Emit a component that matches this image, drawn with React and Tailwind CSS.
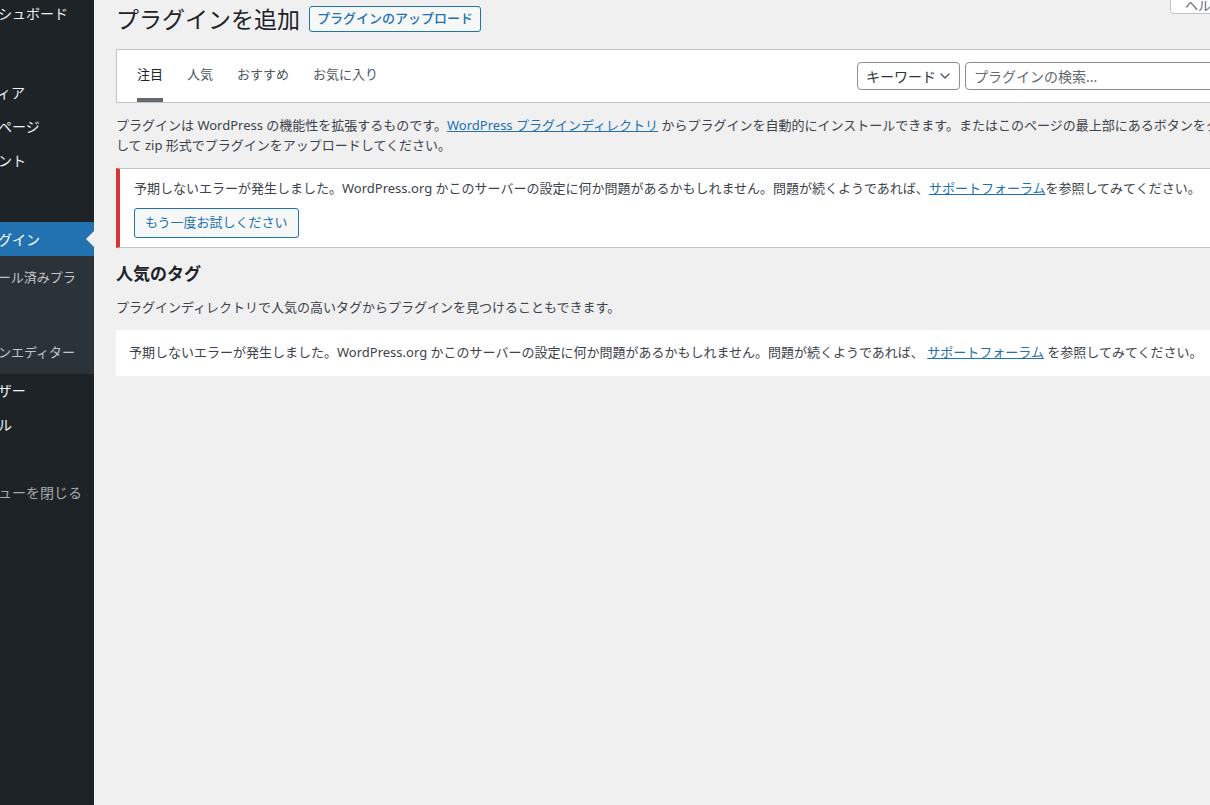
import { ChevronDown } from 'lucide-react'

const font = { fontFamily: '"Noto Sans", "Noto Sans CJK JP", sans-serif' }

function TopItem({ label, active, muted }) {
  return (
    <div
      className={`relative h-[34px] flex items-center pl-[36px] text-[14px] whitespace-nowrap
        ${active ? 'bg-[#2271b1] text-white' : muted ? 'text-[#a7aaad]' : 'text-[#f0f0f1]'}`}
    >
      {label}
      {active && (
        <span className="absolute right-0 top-1/2 -translate-y-1/2 w-0 h-0 border-y-[8px] border-y-transparent border-r-[8px] border-r-[#f0f0f1]" />
      )}
    </div>
  )
}

function Sidebar() {
  return (
    <aside className="w-[94px] shrink-0 bg-[#1d2327] overflow-hidden">
      <div className="w-[160px] ml-[-66px] mt-[-4px]">
        <TopItem label="ダッシュボード" />
        <div className="h-[11px]" />
        <TopItem label="投稿" />
        <TopItem label="メディア" />
        <TopItem label="固定ページ" />
        <TopItem label="コメント" />
        <div className="h-[11px]" />
        <TopItem label="外観" />
        <TopItem label="プラグイン" active />
        <div className="bg-[#2c3338] pt-[7px] pb-[8px] text-[13px] leading-[18.2px] text-[#c3c4c7]">
          <div className="px-[12px] py-[5px] w-[160px]">インストール済みプラグイン</div>
          <div className="px-[12px] py-[5px] text-white font-semibold">新規追加</div>
          <div className="px-[12px] py-[5px] whitespace-nowrap">プラグインエディター</div>
        </div>
        <TopItem label="ユーザー" />
        <TopItem label="ツール" />
        <TopItem label="設定" />
        <TopItem label="メニューを閉じる" muted />
      </div>
    </aside>
  )
}

function Tabs() {
  const tabs = ['注目', '人気', 'おすすめ', 'お気に入り']
  return (
    <div className="h-[54px] bg-white border border-[#c3c4c7] flex items-stretch justify-between pl-[20px] pr-[12px]">
      <div className="flex gap-[24px]">
        {tabs.map((t, i) => (
          <div
            key={t}
            className={`flex items-center pt-[2px] text-[13px] border-b-[4px] ${i === 0 ? 'border-[#646970] text-[#1d2327]' : 'border-transparent text-[#50575e]'}`}
          >
            {t}
          </div>
        ))}
      </div>
      <div className="flex items-center gap-[5px]">
        <div className="h-[28px] w-[103px] border border-[#8c8f94] rounded-[4px] flex items-center justify-between pl-[8px] pr-[6px] text-[14px] text-[#2c3338] bg-white">
          キーワード
          <ChevronDown size={16} strokeWidth={2} className="text-[#50575e]" />
        </div>
        <div className="h-[28px] w-[416px] border border-[#8c8f94] rounded-[4px] flex items-center px-[8px] text-[14px] text-[#646970] bg-white">
          プラグインの検索...
        </div>
      </div>
    </div>
  )
}

function ErrorText({ spaced }) {
  return (
    <>
      予期しないエラーが発生しました。WordPress.org かこのサーバーの設定に何か問題があるかもしれません。問題が続くようであれば、
      {spaced ? ' ' : ''}
      <a className="text-[#2271b1] underline">サポートフォーラム</a>
      {spaced ? ' ' : ''}を参照してみてください。
    </>
  )
}

export default function App() {
  return (
    <div style={font} className="w-[1210px] h-[805px] overflow-hidden flex bg-[#f0f0f1] text-[#3c434a]">
      <Sidebar />
      <main className="relative flex-1 min-w-0">
        {/* help tab */}
        <div className="absolute left-[1076px] top-[-12px] w-[70px] h-[26px] bg-white border border-[#c3c4c7] rounded-b-[4px] text-[13px] text-[#646970] pl-[14px] leading-[26px] pt-[3px]">
          ヘルプ
        </div>

        <div className="w-[1300px] pl-[22px] pt-[3px]">
          <div className="flex items-center h-[32px]">
            <h1 className="text-[23px] font-normal text-[#1d2327] leading-[32px]">プラグインを追加</h1>
            <span className="ml-[9px] h-[26px] px-[7px] flex items-center border border-[#2271b1] rounded-[3px] bg-[#f6f7f7] text-[#2271b1] text-[13px] font-medium">
              プラグインのアップロード
            </span>
          </div>

          <div className="mt-[14px]">
            <Tabs />
          </div>

          <p className="mt-[13px] text-[13px] leading-[19.5px]">
            プラグインは WordPress の機能性を拡張するものです。
            <a className="text-[#2271b1] underline">WordPress プラグインディレクトリ</a>
            {' '}からプラグインを自動的にインストールできます。またはこのページの最上部にあるボタンをクリック
            <br />
            して zip 形式でプラグインをアップロードしてください。
          </p>

          <div className="mt-[13px] h-[80px] bg-white border border-[#c3c4c7] border-l-[4px] border-l-[#d63638] pl-[14px] pt-[10px]">
            <p className="text-[13px] leading-[19.5px]">
              <ErrorText />
            </p>
            <button className="mt-[9px] h-[30px] px-[10px] border border-[#2271b1] rounded-[3px] bg-[#f6f7f7] text-[#2271b1] text-[13px]">
              もう一度お試しください
            </button>
          </div>

          <h2 className="mt-[15px] text-[17px] font-semibold text-[#1d2327] leading-[22px]">人気のタグ</h2>
          <p className="mt-[13px] text-[13px] leading-[19.5px]">
            プラグインディレクトリで人気の高いタグからプラグインを見つけることもできます。
          </p>
          <div className="mt-[12px] h-[46px] bg-white flex items-center pl-[13px] text-[13px]">
            <span>
              <ErrorText spaced />
            </span>
          </div>
        </div>
      </main>
    </div>
  )
}
